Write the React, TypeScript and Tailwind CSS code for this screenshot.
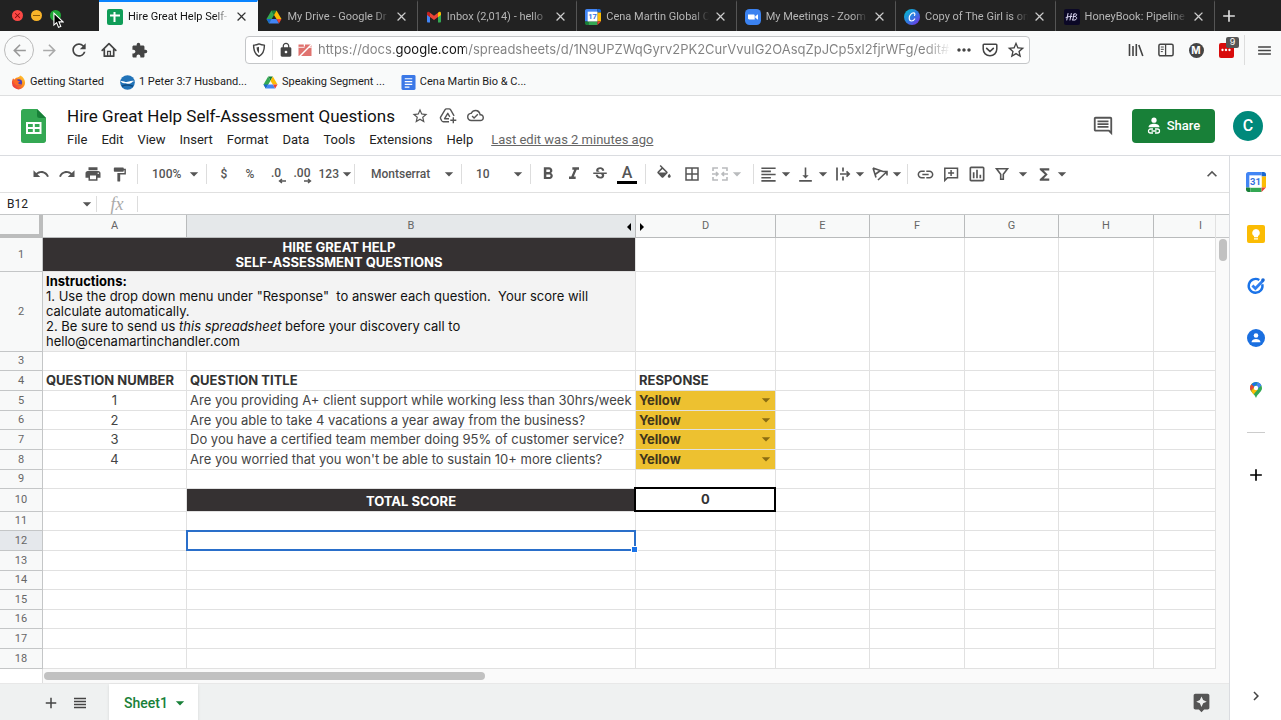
import clsx from "clsx";
import { type ReactNode } from "react";
import {
  MdAdd,
  MdArrowBack,
  MdArrowDropDown,
  MdArrowForward,
  MdAssistant,
  MdBorderAll,
  MdChevronRight,
  MdClose,
  MdExtension,
  MdFormatAlignLeft,
  MdFormatBold,
  MdFormatItalic,
  MdFormatPaint,
  MdFunctions,
  MdInsertLink,
  MdKeyboardArrowUp,
  MdLock,
  MdMenu,
  MdMoreHoriz,
  MdOutlineCloudDone,
  MdOutlineComment,
  MdOutlineInsertChart,
  MdPrint,
  MdRedo,
  MdRefresh,
  MdStarBorder,
  MdStrikethroughS,
  MdUndo,
  MdVerticalAlignBottom,
} from "react-icons/md";

type IconProps = { className?: string };

const SheetsFavicon = () => (
  <svg viewBox="0 0 16 16" className="size-4">
    <rect width="16" height="16" rx="2" fill="#109d58" />
    <path d="M6.500 3h2v10h-2zM3 5.500h10v2H3z" fill="#fff" />
  </svg>
);

const DriveIcon = ({ className = "size-4" }: IconProps) => (
  <svg viewBox="0 0 16 16" className={className}>
    <path d="M5.500 1.500h5L8 6z" fill="#188038" />
    <path d="M5.500 1.500 8 6l-5 8.500L.5 10z" fill="#34a853" />
    <path d="m10.500 1.500 5 8.500h-5L8 6z" fill="#fbbc04" />
    <path d="M.5 10h5L3 14.500z" fill="#1967d2" />
    <path d="M5.500 10h5l2.500 4.500H3z" fill="#4285f4" />
    <path d="M10.500 10h5L13 14.500z" fill="#ea4335" />
  </svg>
);

const GmailIcon = () => (
  <svg viewBox="0 0 16 16" className="size-4">
    <path d="M1 4.500v8c0 .5.400 1 1 1h2V6.500z" fill="#4285f4" />
    <path d="M15 4.500v8c0 .5-.4 1-1 1h-2V6.500z" fill="#34a853" />
    <path d="M4 3.800V8l4 3 4-3V3.800L8 6.800z" fill="#ea4335" />
    <path d="M1 4.300V6l3 2.200V3.700C2.700 2.300 1 2.800 1 4.300z" fill="#c5221f" />
    <path d="M15 4.300V6l-3 2.200V3.700c1.300-1.400 3-.9 3 .6z" fill="#fbbc04" />
  </svg>
);

const CalendarIcon = ({ day, className = "size-4" }: IconProps & { day: string }) => (
  <svg viewBox="0 0 18 18" className={className}>
    <path d="M2 0h12v4H4v10H0V2c0-1 1-2 2-2z" fill="#4285f4" />
    <path d="M14 0h2c1 0 2 1 2 2v2h-4z" fill="#1967d2" />
    <path d="M14 4h4v10h-4z" fill="#fbbc04" />
    <path d="M0 14h4v4H2c-1 0-2-1-2-2z" fill="#188038" />
    <path d="M4 14h10v4H4z" fill="#34a853" />
    <path d="M14 14h4l-4 4z" fill="#ea4335" />
    <path d="M3 3h11v11H3z" fill="#fff" />
    <text x="8.500" y="11.800" fontSize="8.500" fontWeight="700" textAnchor="middle" fill="#3573e0" fontFamily="Roboto, sans-serif">
      {day}
    </text>
  </svg>
);

const ZoomIcon = () => (
  <svg viewBox="0 0 16 16" className="size-4">
    <rect width="16" height="16" rx="4.500" fill="#3b82f0" />
    <path d="M3 5.500h5.500c.8 0 1.200.5 1.200 1.200v3.800H4.200c-.8 0-1.200-.5-1.200-1.200zM10.300 7.200 13 5.300v5.400l-2.700-1.900z" fill="#fff" />
  </svg>
);

const CanvaIcon = () => (
  <svg viewBox="0 0 16 16" className="size-4">
    <defs>
      <linearGradient id="canva" x1="0" y1="0" x2="1" y2="1">
        <stop offset="0" stopColor="#00c4cc" />
        <stop offset=".5" stopColor="#2f7be0" />
        <stop offset="1" stopColor="#7d2ae8" />
      </linearGradient>
    </defs>
    <circle cx="8" cy="8" r="8" fill="url(#canva)" />
    <path d="M10.500 6.300c.7-.8.500-2.400-.9-2.400C7.300 3.900 5.200 6.500 5.200 9c0 1.900 1 3 2.400 3 1.300 0 2.400-.9 3.100-2" fill="none" stroke="#fff" strokeWidth="1.200" strokeLinecap="round" />
  </svg>
);

const HoneyBookIcon = () => (
  <svg viewBox="0 0 16 16" className="size-4">
    <rect width="16" height="16" rx="2" fill="#0b0826" />
    <path d="M4 4.500 2.800 11M7.300 4.500 6 11M2 8.500c2-1 4-1 6-1M10 5 8.800 11M9.600 5.500c1-1.200 3.400-1 3 .6-.3 1-1.300 1.300-2.300 1.400 1.500 0 2.700.6 2.300 2-.4 1.600-2.700 2-4 1.400" fill="none" stroke="#dcd8f5" strokeWidth="1" strokeLinecap="round" />
  </svg>
);

const FirefoxIcon = () => (
  <svg viewBox="0 0 16 16" className="size-[15px]">
    <defs>
      <linearGradient id="firefox" x1="1" y1="0" x2="0" y2="1">
        <stop offset="0" stopColor="#ffd83a" />
        <stop offset=".45" stopColor="#ff8a1c" />
        <stop offset="1" stopColor="#e5194f" />
      </linearGradient>
    </defs>
    <path d="M2.300 3.500 3.600 5C4.800 3 6 2.600 7 2.600 8.500 2.400 9.300 1.500 9.800.6c2.700 1.200 5.200 4 5.200 7.600A7 7 0 0 1 1 8.500c0-2 .4-3.600 1.300-5z" fill="url(#firefox)" />
    <circle cx="8.300" cy="8" r="3.500" fill="#4e3fb5" />
    <path d="M3.600 5c1.500-.4 3 .2 3.900 1.300l2 .4c-.3 1-1.500 1.200-2 1.900.8 1.600 2.600 1.400 3.800.6-.8 2-2.800 2.700-4.500 2.200C4 10.500 3 8 3.600 5z" fill="#ff6a26" />
  </svg>
);

const EagleIcon = () => (
  <svg viewBox="0 0 16 16" className="size-[15px]">
    <circle cx="8" cy="8" r="7.800" fill="#2173b8" />
    <path d="M.5 6.500c2.500-.8 4.500 1 6.500 1s4-2 8.300-1.200c-2.300.5-3 2.700-5.300 3-2.500.4-3.600-.8-5.500-.5-1.500.1-2.500-.6-4-2.300z" fill="#fff" />
    <path d="M2 12c3-1.500 8-1.500 12 0" fill="none" stroke="#0e4a80" strokeWidth="1.500" />
  </svg>
);

const DocsIcon = () => (
  <svg viewBox="0 0 16 16" className="size-[15px]">
    <rect x=".5" width="15" height="16" rx="1.500" fill="#3b78e7" />
    <path d="M4 4h8M4 7h8M4 10h8M4 13h5" stroke="#fff" strokeWidth="1.300" />
  </svg>
);

const HomeIcon = () => (
  <svg viewBox="0 0 16 16" className="size-4">
    <path d="M1.200 8.300 8 1.700l6.800 6.600M3.300 7.500v6.700h9.400V7.500" fill="none" stroke="#444" strokeWidth="1.700" strokeLinejoin="round" strokeLinecap="round" />
    <path d="M6.600 14V9.300h2.800V14" fill="none" stroke="#444" strokeWidth="1.300" />
  </svg>
);

const ShieldIcon = () => (
  <svg viewBox="0 0 16 16" className="size-4 shrink-0">
    <path d="M8 1.900c1.800.9 3.600 1.200 5.400 1.200.1 5-1.100 9-5.400 11.300C3.700 12.100 2.500 8.100 2.600 3.100 4.400 3.100 6.200 2.800 8 1.900z" fill="none" stroke="#444" strokeWidth="1.400" strokeLinejoin="round" />
    <path d="M8 4.700v6.500C6.300 9.900 5.700 8 5.600 5.300 6.500 5.200 7.300 5 8 4.700z" fill="#444" />
  </svg>
);

const BlockedIcon = () => (
  <svg viewBox="0 0 16 16" className="size-4 shrink-0">
    <path d="M1.500 2.500h5.300v2h1.200v-2h6.500V14h-13z" fill="#e0736f" />
    <path d="M1.500 15.500 15.500 1.500" stroke="#fff" strokeWidth="1.500" />
    <path d="M1.300 5.300h6.200M11.500 5.300h3.200" stroke="#fff" strokeWidth=".9" />
  </svg>
);

const PocketIcon = () => (
  <svg viewBox="0 0 16 16" className="size-4">
    <path d="M2 2.200h12c.5 0 .8.300.8.800v4c0 4-3 6.800-6.800 6.800S1.200 11 1.200 7V3c0-.5.300-.8.800-.8z" fill="none" stroke="#444" strokeWidth="1.500" />
    <path d="m4.700 6.300 3.300 3.200 3.300-3.200" fill="none" stroke="#444" strokeWidth="1.700" strokeLinecap="round" strokeLinejoin="round" />
  </svg>
);

const LibraryIcon = () => (
  <svg viewBox="0 0 16 16" className="size-4">
    <path d="M1.500 2v12M5 4v10M8.300 2v12M10.800 3l4 11" stroke="#444" strokeWidth="1.600" fill="none" />
  </svg>
);

const SidebarIcon = () => (
  <svg viewBox="0 0 16 16" className="size-4">
    <rect x=".9" y="2.200" width="14.200" height="11.600" rx="1.500" fill="none" stroke="#444" strokeWidth="1.500" />
    <path d="M7.600 2v12" stroke="#444" strokeWidth="1.300" />
    <path d="M2.800 5h3M2.800 7.300h3M2.800 9.600h2" stroke="#444" strokeWidth="1" />
  </svg>
);

const SheetsLogo = () => (
  <svg viewBox="0 0 25 34" className="h-[34px] w-[25px] shrink-0">
    <path d="M2.500 0H16l9 9v22.500c0 1.400-1.100 2.500-2.500 2.500h-20A2.500 2.500 0 0 1 0 31.500v-29C0 1.100 1.100 0 2.500 0z" fill="#34a853" />
    <path d="m16 0 9 9h-6.500A2.500 2.500 0 0 1 16 6.500z" fill="#188038" />
    <path d="M5 13h15.500v12H5zm2 2v3h4.800v-3zm6.800 0v3h4.700v-3zM7 20v3h4.800v-3zm6.800 0v3h4.700v-3z" fill="#fff" fillRule="evenodd" />
  </svg>
);

const AddToDriveIcon = () => (
  <svg viewBox="0 0 18 18" className="size-[18px]">
    <path d="M10 14.800H4.200c-.6 0-1-.3-1.300-.8l-1.300-2.300c-.3-.5-.3-1 0-1.500l4.500-7.500c.3-.5.700-.8 1.300-.8h2.800c.6 0 1 .3 1.300.8l3.600 6.200M10 11.700H5.600l3.200-5.400 2 3.500" fill="none" stroke="#555" strokeWidth="1.400" strokeLinejoin="round" />
    <path d="M14.300 10.300v6M11.300 13.300h6" stroke="#555" strokeWidth="1.400" />
  </svg>
);

const FillIcon = () => (
  <svg viewBox="0 0 24 24" className="size-[18px]" fill="currentColor">
    <path d="M16.560 8.940 7.620 0 6.210 1.410l2.380 2.380-5.150 5.150c-.59.59-.59 1.540 0 2.120l5.500 5.500c.29.290.680.440 1.060.440s.770-.150 1.060-.440l5.500-5.500c.590-.580.590-1.530 0-2.120zM5.210 10 10 5.210 14.790 10zM19 11.500s-2 2.170-2 3.500c0 1.100.900 2 2 2s2-.900 2-2c0-1.330-2-3.500-2-3.500z" />
  </svg>
);

const FilterIcon = () => (
  <svg viewBox="0 0 18 18" className="size-[18px]">
    <path d="M3.500 3.800h11l-4.200 5.500v5H7.700v-5z" fill="none" stroke="#555" strokeWidth="1.600" />
  </svg>
);

const MergeIcon = () => (
  <svg viewBox="0 0 18 18" className="size-[18px]">
    <path d="M7 3H2v3M2 12v3h5M11 3h5v3M16 12v3h-5M1 9h6M11 9h6M5 7l2 2-2 2M13 7l-2 2 2 2" fill="none" stroke="#b9bbbd" strokeWidth="1.600" />
  </svg>
);

const WrapIcon = () => (
  <svg viewBox="0 0 18 18" className="size-[18px]">
    <path d="M3 2.500v13M9 2.500v4M9 11.500v4M6 9h9M12.500 6.300 15.200 9l-2.700 2.700" fill="none" stroke="#555" strokeWidth="1.700" />
  </svg>
);

const RotateIcon = () => (
  <svg viewBox="0 0 18 18" className="size-[18px]">
    <path d="m2 3 10 3.500M2 3l3 9.500M9.500 5.500 4 9.500M7 15l8.500-8M12 6.500h4v4" fill="none" stroke="#555" strokeWidth="1.600" />
  </svg>
);

const AddCommentIcon = () => (
  <svg viewBox="0 0 18 18" className="size-[18px]">
    <path d="M2.800 15.500V3.300h12.700v9.400H5.500zM9.100 5v6M6.100 8h6" fill="none" stroke="#555" strokeWidth="1.500" />
  </svg>
);

const DecimalArrow = ({ d }: { d: string }) => (
  <svg viewBox="0 0 8 6" className="absolute right-[3px] bottom-0 h-[6px] w-2">
    <path d={d} fill="none" stroke="#555" strokeWidth="1.400" />
  </svg>
);

const KeepIcon = () => (
  <svg viewBox="0 0 20 20" className="size-5">
    <rect x="1" y="1" width="18" height="18" rx="2" fill="#fbbc04" />
    <path d="M10 5a3.800 3.800 0 0 1 2 7v1.300H8V12a3.800 3.800 0 0 1 2-7zM8 14.200h4v1.300H8z" fill="#fff" />
  </svg>
);

const TasksIcon = () => (
  <svg viewBox="0 0 20 20" className="size-5">
    <path d="M16.300 8.200a6.900 6.900 0 1 1-3-4.200" fill="none" stroke="#1a73e8" strokeWidth="2.400" />
    <path d="m6.400 9.500 3 3 7.800-8" fill="none" stroke="#2f7ff0" strokeWidth="2.800" />
    <circle cx="17" cy="4" r="1.800" fill="#1967d2" />
  </svg>
);

const ContactsIcon = () => (
  <svg viewBox="0 0 20 20" className="size-5">
    <circle cx="10" cy="10" r="9" fill="#1a6fe0" />
    <circle cx="10" cy="7.500" r="2.300" fill="#fff" />
    <path d="M5.500 14.200c0-2.200 2.500-3.200 4.500-3.200s4.500 1 4.500 3.200z" fill="#fff" />
  </svg>
);

const MapsIcon = () => (
  <svg viewBox="0 0 20 20" className="size-5">
    <path d="M10 2a6 6 0 0 1 6 6c0 4-4.500 5.500-6 10-1.500-4.500-6-6-6-10a6 6 0 0 1 6-6z" fill="#34a853" />
    <path d="M5.500 4.300A6 6 0 0 1 10 2l1.700.3L8 7z" fill="#1a73e8" />
    <path d="M11.700 2.300c1.800.5 3 1.700 3.700 3.100L12 8.500l-2-2z" fill="#4285f4" />
    <path d="M5.500 4.300 8.300 7 5.100 11C3.500 8.800 3.700 6.300 5.500 4.300z" fill="#ea4335" />
    <path d="m5.100 11 3-3.500 3.400 2.300-4 4.700C6.600 13.100 5.700 12 5.100 11z" fill="#fbbc04" />
    <circle cx="10" cy="8" r="2.200" fill="#fff" />
  </svg>
);

const ShareIcon = () => (
  <svg viewBox="0 0 14 18" className="h-[18px] w-[14px]">
    <circle cx="7" cy="3.200" r="2.600" fill="#fff" />
    <path d="M1.500 10.300c0-2.700 3-3.600 5.500-3.600s5.500.9 5.500 3.600z" fill="#fff" />
    <path d="M6 12H3.500a2 2 0 0 0 0 4H6M8 12h2.500a2 2 0 0 1 0 4H8M4.500 14h5" fill="none" stroke="#fff" strokeWidth="1.300" />
  </svg>
);

const browserTabs = [
  { title: "Hire Great Help Self-", icon: <SheetsFavicon />, active: true },
  { title: "My Drive - Google Dr", icon: <DriveIcon /> },
  { title: "Inbox (2,014) - hello", icon: <GmailIcon /> },
  { title: "Cena Martin Global C", icon: <CalendarIcon day="17" /> },
  { title: "My Meetings - Zoom", icon: <ZoomIcon /> },
  { title: "Copy of The Girl is on", icon: <CanvaIcon /> },
  { title: "HoneyBook: Pipeline", icon: <HoneyBookIcon /> },
];

const TabStrip = () => (
  <div className="flex h-[31px] bg-[#222]">
    <div className="relative flex w-[99px] items-center gap-2 pl-3">
      <button aria-label="Close window" className="flex size-[11px] items-center justify-center rounded-full bg-[#fb4845] text-[#7a0909]">
        <MdClose size={9} />
      </button>
      <button aria-label="Minimize window" className="flex size-[11px] items-center justify-center rounded-full bg-[#f9b429]">
        <span className="h-px w-[7px] bg-[#8a5a07]" />
      </button>
      <button aria-label="Zoom window" className="size-[11px] rounded-full bg-[#1fa636]" />
      <svg viewBox="0 0 12 18" className="absolute top-3 left-[53px] h-[17px] w-[11px]">
        <path d="M1 1v13l3-2.700L6 16.500l2.500-1-2-5H11z" fill="#000" stroke="#fff" strokeWidth="1.200" />
      </svg>
    </div>
    {browserTabs.map(({ title, icon, active }) => (
      <div
        key={title}
        className={clsx(
          "flex min-w-0 flex-1 items-center gap-1 border-t-2 border-r pr-2 pl-2",
          active ? "border-[#f9fafa] border-t-[#0a84ff] bg-[#f9fafa] text-[#111]" : "border-t-[#222] border-r-[#555] text-[#b5b5b5]",
        )}
      >
        <span className="shrink-0">{icon}</span>
        <span className="min-w-0 flex-1 pl-px text-[11px] leading-4 whitespace-nowrap [mask-image:linear-gradient(to_right,#000_85%,transparent)]">
          {title}
        </span>
        <button aria-label={`Close ${title}`} className={clsx("shrink-0", active ? "text-[#333]" : "text-[#ccc]")}>
          <MdClose size={15} />
        </button>
      </div>
    ))}
    <div className="flex w-[66px] items-center pl-1">
      <button aria-label="New tab" className="text-[#ddd]">
        <MdAdd size={20} />
      </button>
    </div>
  </div>
);

const AddressRow = () => (
  <div className="flex h-[38px] items-center font-['Inter',sans-serif] text-[#444]">
    <div className="flex w-[245px] items-center pl-1">
      <button aria-label="Back" className="flex size-[30px] items-center justify-center rounded-full border border-[#bbb] text-[#999]">
        <MdArrowBack size={19} />
      </button>
      <button aria-label="Forward" className="flex w-[30px] justify-center text-[#aaa]">
        <MdArrowForward size={19} />
      </button>
      <button aria-label="Reload" className="flex w-[30px] justify-center">
        <MdRefresh size={20} />
      </button>
      <button aria-label="Home" className="flex w-[30px] justify-center">
        <HomeIcon />
      </button>
      <button aria-label="Add-ons" className="flex w-[30px] justify-center">
        <MdExtension size={17} />
      </button>
    </div>
    <div className="flex h-7 min-w-0 flex-1 items-center rounded border border-[#c4c6c8] bg-white pl-[5px]">
      <ShieldIcon />
      <span className="mx-[5px] h-5 w-px bg-[#ddd]" />
      <MdLock size={16} className="shrink-0" />
      <span className="w-[3px]" />
      <BlockedIcon />
      <input
        aria-label="Address"
        readOnly
        value="https://docs.google.com/spreadsheets/d/1N9UPZWqGyrv2PK2CurVvuIG2OAsqZpJCp5xl2fjrWFg/edit#gid"
        className="ml-[5px] min-w-0 flex-1 bg-[linear-gradient(to_right,#808080_76px,#111_76px,#111_147px,#808080_147px,#808080_96%,transparent)] bg-clip-text text-[13px] text-transparent outline-none"
      />
      <button aria-label="Page actions" className="flex w-[26px] justify-center">
        <MdMoreHoriz size={20} />
      </button>
      <button aria-label="Save to Pocket" className="flex w-[26px] justify-center">
        <PocketIcon />
      </button>
      <button aria-label="Bookmark this page" className="flex w-[26px] justify-center">
        <MdStarBorder size={20} />
      </button>
    </div>
    <div className="flex w-[251px] items-center justify-end pr-[2px]">
      <button aria-label="Library" className="flex w-[30px] justify-center">
        <LibraryIcon />
      </button>
      <button aria-label="Sidebars" className="flex w-[30px] justify-center">
        <SidebarIcon />
      </button>
      <button aria-label="Account" className="flex w-[30px] justify-center">
        <span className="flex size-[15px] items-center justify-center rounded-full bg-[#444] text-[10px] font-bold text-white">M</span>
      </button>
      <button aria-label="Password manager" className="relative flex w-[30px] justify-center">
        <span className="flex size-[15px] items-center justify-center rounded-[2px] bg-[#d80b0b] text-white">
          <MdMoreHoriz size={14} />
        </span>
        <span className="absolute -top-[6px] left-[15px] flex h-[11px] w-[13px] items-center justify-center rounded-[2px] bg-[#555] text-[9px] text-white">9</span>
      </button>
      <span className="ml-[3px] h-[30px] w-px bg-[#ddd]" />
      <button aria-label="Open menu" className="ml-1 flex w-[30px] justify-center">
        <MdMenu size={17} />
      </button>
    </div>
  </div>
);

const bookmarks = [
  { title: "Getting Started", icon: <FirefoxIcon /> },
  { title: "1 Peter 3:7 Husband...", icon: <EagleIcon /> },
  { title: "Speaking Segment ...", icon: <DriveIcon className="size-[15px]" /> },
  { title: "Cena Martin Bio & C...", icon: <DocsIcon /> },
];

const BookmarksBar = () => (
  <nav className="flex h-[27px] items-center gap-4 border-b border-[#dedfe0] pl-[11px]">
    {bookmarks.map(({ title, icon }) => (
      <a key={title} href="#" className="flex items-center gap-1 text-[11px] leading-4 whitespace-nowrap text-[#1b1b1b]">
        {icon}
        {title}
      </a>
    ))}
  </nav>
);

const menus = ["File", "Edit", "View", "Insert", "Format", "Data", "Tools", "Extensions", "Help"];

const DocumentHeader = () => (
  <header className="flex h-[60px] items-center border-b border-[#dadce0] bg-white pr-[18px] pl-[21px]">
    <SheetsLogo />
    <div className="ml-[21px] flex min-w-0 flex-1 flex-col pt-1">
      <div className="flex items-center text-[#555]">
        <h1 className="mr-4 text-[17px] leading-6 whitespace-nowrap text-[#111]">Hire Great Help Self-Assessment Questions</h1>
        <button aria-label="Star" className="mr-[10px]">
          <MdStarBorder size={18} />
        </button>
        <button aria-label="Move" className="mr-[10px]">
          <AddToDriveIcon />
        </button>
        <button aria-label="Document status">
          <MdOutlineCloudDone size={17} />
        </button>
      </div>
      <div className="flex items-center gap-[14px] text-[13px] leading-6 whitespace-nowrap text-[#222]">
        {menus.map((menu) => (
          <button key={menu}>{menu}</button>
        ))}
        <a href="#" className="ml-1 text-[#666] underline">
          Last edit was 2 minutes ago
        </a>
      </div>
    </div>
    <button aria-label="Open comment history" className="mr-[18px] text-[#555]">
      <MdOutlineComment size={22} />
    </button>
    <button className="mr-[18px] flex h-[34px] w-[83px] items-center justify-center gap-[6px] rounded bg-[#188038] text-[13px] font-medium text-white">
      <ShareIcon />
      Share
    </button>
    <button aria-label="Google account" className="flex size-[30px] items-center justify-center rounded-full bg-[#00897b] text-base font-medium text-white">
      C
    </button>
  </header>
);

const Caret = () => <MdArrowDropDown size={20} className="-mx-[2px] shrink-0" />;

type ToolProps = { label: string; children: ReactNode; className?: string };

const Tool = ({ label, children, className = "w-[26px] justify-center" }: ToolProps) => (
  <button aria-label={label} className={clsx("flex shrink-0 items-center", className)}>
    {children}
  </button>
);

const ToolGroup = ({ className, children }: { className: string; children: ReactNode }) => (
  <div className={clsx("flex h-5 shrink-0 items-center", className)}>{children}</div>
);

const Toolbar = () => (
  <div className="flex h-[37px] items-center border-b border-[#e0e0e0] pl-7 text-xs font-medium text-[#555]">
    <ToolGroup className="w-[109px]">
      <Tool label="Undo">
        <MdUndo size={18} />
      </Tool>
      <Tool label="Redo">
        <MdRedo size={18} />
      </Tool>
      <Tool label="Print">
        <MdPrint size={18} />
      </Tool>
      <Tool label="Paint format">
        <MdFormatPaint size={17} />
      </Tool>
    </ToolGroup>
    <ToolGroup className="w-[69px] border-l border-[#ddd]">
      <Tool label="Zoom" className="w-full justify-between pr-1 pl-[14px]">
        100%
        <Caret />
      </Tool>
    </ToolGroup>
    <ToolGroup className="w-[148px] border-l border-[#ddd] pl-1">
      <Tool label="Format as currency">$</Tool>
      <Tool label="Format as percent">%</Tool>
      <Tool label="Decrease decimal places" className="relative h-5 w-[26px] justify-center pb-[2px]">
        .0
        <DecimalArrow d="M8 3H2M4 1 1.500 3 4 5" />
      </Tool>
      <Tool label="Increase decimal places" className="relative h-5 w-[26px] justify-center pb-[2px]">
        .00
        <DecimalArrow d="M0 3h6M4 1l2.500 2L4 5" />
      </Tool>
      <Tool label="More formats" className="w-10 justify-end">
        123
        <Caret />
      </Tool>
    </ToolGroup>
    <ToolGroup className="w-[107px] border-l border-[#ddd]">
      <Tool label="Font" className="w-full justify-between pr-1 pl-4">
        Montserrat
        <Caret />
      </Tool>
    </ToolGroup>
    <ToolGroup className="w-[69px] border-l border-[#ddd]">
      <Tool label="Font size" className="w-full justify-between pr-1 pl-[14px]">
        10
        <Caret />
      </Tool>
    </ToolGroup>
    <ToolGroup className="w-[115px] border-l border-[#ddd] pl-1">
      <Tool label="Bold">
        <MdFormatBold size={20} />
      </Tool>
      <Tool label="Italic">
        <MdFormatItalic size={20} />
      </Tool>
      <Tool label="Strikethrough">
        <MdStrikethroughS size={18} />
      </Tool>
      <Tool label="Text color" className="w-7 flex-col justify-center">
        <span className="text-base leading-4">A</span>
        <span className="h-[3px] w-5 bg-black" />
      </Tool>
    </ToolGroup>
    <ToolGroup className="w-[108px] border-l border-[#ddd] pl-1">
      <Tool label="Fill color" className="w-7 justify-center">
        <FillIcon />
      </Tool>
      <Tool label="Borders" className="w-7 justify-center">
        <MdBorderAll size={18} />
      </Tool>
      <Tool label="Merge cells" className="w-11 justify-center text-[#b9bbbd]">
        <MergeIcon />
        <Caret />
      </Tool>
    </ToolGroup>
    <ToolGroup className="w-[154px] border-l border-[#ddd] pl-1">
      <Tool label="Horizontal align" className="w-[37px] justify-center">
        <MdFormatAlignLeft size={19} />
        <Caret />
      </Tool>
      <Tool label="Vertical align" className="w-[37px] justify-center">
        <MdVerticalAlignBottom size={19} />
        <Caret />
      </Tool>
      <Tool label="Text wrapping" className="w-[37px] justify-center">
        <WrapIcon />
        <Caret />
      </Tool>
      <Tool label="Text rotation" className="w-[37px] justify-center">
        <RotateIcon />
        <Caret />
      </Tool>
    </ToolGroup>
    <ToolGroup className="border-l border-[#ddd] pl-1">
      <Tool label="Insert link">
        <MdInsertLink size={19} />
      </Tool>
      <Tool label="Insert comment">
        <AddCommentIcon />
      </Tool>
      <Tool label="Insert chart">
        <MdOutlineInsertChart size={20} />
      </Tool>
      <Tool label="Create a filter" className="w-11 justify-center gap-1">
        <FilterIcon />
        <Caret />
      </Tool>
      <Tool label="Functions" className="w-[37px] justify-center">
        <MdFunctions size={19} />
        <Caret />
      </Tool>
    </ToolGroup>
    <button aria-label="Hide the menus" className="mr-[7px] ml-auto">
      <MdKeyboardArrowUp size={20} />
    </button>
  </div>
);

const FormulaBar = () => (
  <div className="flex h-[21px] items-center text-xs text-[#222]">
    <input aria-label="Name box" defaultValue="B12" className="w-[78px] bg-transparent pl-[7px] outline-none" />
    <button aria-label="Named ranges" className="flex w-[18px] justify-center text-[#555]">
      <Caret />
    </button>
    <span className="h-4 w-px bg-[#ddd]" />
    <label htmlFor="formula" className="w-10 text-center font-['Liberation_Serif',serif] text-lg leading-5 text-[#aaa] italic">
      fx
    </label>
    <span className="h-4 w-px bg-[#ddd]" />
    <input id="formula" className="min-w-0 flex-1 bg-transparent px-2 outline-none" />
  </div>
);

const columns = [
  { name: "A", width: "w-[144px]" },
  { name: "B", width: "w-[449px]" },
  { name: "D", width: "w-[140px]" },
  { name: "E", width: "w-[94px]" },
  { name: "F", width: "w-[95px]" },
  { name: "G", width: "w-[94px]" },
  { name: "H", width: "w-[95px]" },
  { name: "I", width: "w-[94px]" },
];

const questions = [
  { row: 5, height: "h-5", title: "Are you providing A+ client support while working less than 30hrs/week" },
  { row: 6, height: "h-[19px]", title: "Are you able to take 4 vacations a year away from the business?" },
  { row: 7, height: "h-5", title: "Do you have a certified team member doing 95% of customer service?" },
  { row: 8, height: "h-5", title: "Are you worried that you won't be able to sustain 10+ more clients?" },
];

const emptyRows = [
  { row: 13, height: "h-5" },
  { row: 14, height: "h-[19px]" },
  { row: 15, height: "h-5" },
  { row: 16, height: "h-[19px]" },
  { row: 17, height: "h-5" },
  { row: 18, height: "h-5" },
];

const Cell = ({ className, colSpan, children }: { className?: string; colSpan?: number; children?: ReactNode }) => (
  <td colSpan={colSpan} className={clsx("border-r border-b border-[#e1e1e1] p-0", className)}>
    {children}
  </td>
);

const Blank = ({ count }: { count: number }) => Array.from({ length: count }, (_, i) => <Cell key={i} />);

const Row = ({ row, height, children }: { row: number; height: string; children: ReactNode }) => (
  <tr className={height}>
    <th
      scope="row"
      className={clsx(
        "border-r border-b border-[#c4c6c7] p-0 font-['Roboto',sans-serif] text-[11px] leading-4 font-normal text-[#666]",
        row === 12 ? "bg-[#e5e8ec]" : "bg-[#f8f9f9]",
      )}
    >
      {row}
    </th>
    {children}
  </tr>
);

const Grid = () => (
  <table className="w-[1248px] table-fixed border-separate border-spacing-0 bg-white text-[13px] leading-[15px] text-[#444]">
    <colgroup>
      <col className="w-[43px]" />
      {columns.map(({ name, width }) => (
        <col key={name} className={width} />
      ))}
    </colgroup>
    <thead>
      <tr className="h-[23px]">
        <th aria-label="Select all" className="border-r-4 border-b-4 border-[#bcbdbd] bg-[#f8f9f9] p-0" />
        {columns.map(({ name }) => (
          <th
            key={name}
            scope="col"
            className={clsx(
              "relative border-r border-b border-[#b9bbbc] p-0 font-['Roboto',sans-serif] text-[11px] leading-4 font-normal text-[#666]",
              name === "B" ? "bg-[#e5e8ea]" : "bg-[#f8f9f9]",
            )}
          >
            {name}
            {name === "B" && (
              <svg viewBox="0 0 4 8" className="absolute top-2 right-1 h-2 w-1">
                <path d="M4 0v8L0 4z" />
              </svg>
            )}
            {name === "D" && (
              <svg viewBox="0 0 4 8" className="absolute top-2 left-1 h-2 w-1">
                <path d="M0 0v8l4-4z" />
              </svg>
            )}
          </th>
        ))}
      </tr>
    </thead>
    <tbody>
      <Row row={1} height="h-[34px]">
        <Cell colSpan={2} className="bg-[#353132] text-center font-bold text-white">
          HIRE GREAT HELP
          <br />
          SELF-ASSESSMENT QUESTIONS
        </Cell>
        <Blank count={6} />
      </Row>
      <Row row={2} height="h-20">
        <Cell colSpan={2} className="bg-[#f3f3f3] pr-5 pl-[3px] text-[#111]">
          <b className="text-black">Instructions:</b>
          <br />
          1. Use the drop down menu under "Response"&nbsp; to answer each question.&nbsp; Your score will
          <br />
          calculate automatically.
          <br />
          2. Be sure to send us <i>this spreadsheet</i> before your discovery call to
          <br />
          hello@cenamartinchandler.com
        </Cell>
        <Blank count={6} />
      </Row>
      <Row row={3} height="h-[19px]">
        <Blank count={8} />
      </Row>
      <Row row={4} height="h-5">
        <Cell className="pl-[3px] font-bold whitespace-nowrap text-[#333]">QUESTION NUMBER</Cell>
        <Cell className="pl-[3px] font-bold text-[#333]">QUESTION TITLE</Cell>
        <Cell className="pl-[3px] font-bold text-[#333]">RESPONSE</Cell>
        <Blank count={5} />
      </Row>
      {questions.map(({ row, height, title }, i) => (
        <Row key={row} row={row} height={height}>
          <Cell className="text-center">{i + 1}</Cell>
          <Cell className="overflow-hidden pl-[3px] whitespace-nowrap">{title}</Cell>
          <Cell className="relative border-[#d6af2f] bg-[#edc130]">
            <select aria-label={`Response ${i + 1}`} className="block w-full appearance-none pl-[3px] font-bold text-[#40351c] outline-none">
              <option>Yellow</option>
            </select>
            <MdArrowDropDown size={20} className="pointer-events-none absolute -top-px -right-px text-[#8a6d12]" />
          </Cell>
          <Blank count={5} />
        </Row>
      ))}
      <Row row={9} height="h-[19px]">
        <Blank count={8} />
      </Row>
      <Row row={10} height="h-[23px]">
        <Cell />
        <Cell className="bg-[#353132] pt-[3px] text-center font-bold text-white">TOTAL SCORE</Cell>
        <Cell className="relative pb-[2px] text-center font-bold text-[#333]">
          0
          <span className="absolute -top-[2px] -right-px -bottom-px -left-[2px] border-2 border-black" />
        </Cell>
        <Blank count={5} />
      </Row>
      <Row row={11} height="h-[19px]">
        <Blank count={8} />
      </Row>
      <Row row={12} height="h-5">
        <Cell />
        <Cell className="relative">
          <span className="absolute -top-px -right-px -bottom-px -left-px border-2 border-[#2a6fca]" />
          <span className="absolute -right-[3px] -bottom-[3px] size-[7px] border border-white bg-[#1a73e8]" />
        </Cell>
        <Blank count={6} />
      </Row>
      {emptyRows.map(({ row, height }) => (
        <Row key={row} row={row} height={height}>
          <Blank count={8} />
        </Row>
      ))}
    </tbody>
  </table>
);

const SheetTabs = () => (
  <div className="flex min-h-[37px] flex-1 items-stretch bg-[#eff1f1] text-[#444]">
    <div className="flex w-[109px] items-center gap-[14px] pl-[42px]">
      <button aria-label="Add sheet">
        <MdAdd size={18} />
      </button>
      <button aria-label="All sheets">
        <svg viewBox="0 0 12 12" className="size-3">
          <path d="M0 1.500h12M0 4.500h12M0 7.500h12M0 10.500h12" stroke="#444" strokeWidth="1.700" />
        </svg>
      </button>
    </div>
    <button className="flex items-center gap-1 bg-white pr-[10px] pl-[15px] text-sm font-medium text-[#188038] shadow-sm">
      Sheet1
      <Caret />
    </button>
    <button aria-label="Explore" className="mr-[17px] ml-auto text-[#555]">
      <MdAssistant size={21} />
    </button>
  </div>
);

const SidePanel = () => (
  <aside className="flex w-[52px] shrink-0 flex-col items-center border-l border-[#dadce0] bg-white pt-4 pb-4">
    <div className="flex flex-col gap-8">
      <button aria-label="Calendar">
        <CalendarIcon day="31" className="size-5" />
      </button>
      <button aria-label="Keep">
        <KeepIcon />
      </button>
      <button aria-label="Tasks">
        <TasksIcon />
      </button>
      <button aria-label="Contacts">
        <ContactsIcon />
      </button>
      <button aria-label="Maps">
        <MapsIcon />
      </button>
    </div>
    <hr className="mt-8 w-[18px] border-[#ccc]" />
    <button aria-label="Get add-ons" className="mt-8 text-black">
      <MdAdd size={20} />
    </button>
    <button aria-label="Hide side panel" className="mt-auto text-[#444]">
      <MdChevronRight size={18} />
    </button>
  </aside>
);

export default function App() {
  return (
    <div className="flex min-h-screen flex-col overflow-hidden bg-white font-['Roboto',sans-serif]">
      <div className="bg-[#f9fafa]">
        <TabStrip />
        <AddressRow />
        <BookmarksBar />
      </div>
      <DocumentHeader />
      <div className="flex flex-1">
        <main className="flex min-w-0 flex-1 flex-col">
          <Toolbar />
          <FormulaBar />
          <div className="flex border-t border-[#c4c6c7]">
            <div className="min-w-0 flex-1 overflow-hidden font-['Inter',sans-serif]">
              <Grid />
            </div>
            <div className="w-[14px] border-l border-[#e1e1e1] bg-[#fafafa]">
              <div className="h-[23px] border-b border-[#c4c6c7] bg-[#f8f9f9]" />
              <div className="mx-auto mt-px h-[22px] w-2 rounded-full bg-[#c1c1c1]" />
            </div>
          </div>
          <div className="flex h-[15px] items-center border-b border-[#e8e8e8] bg-[#fafafa]">
            <div className="h-full w-[43px] border-r border-[#ddd] bg-white" />
            <div className="ml-px h-2 w-[441px] rounded-full bg-[#c1c1c1]" />
          </div>
          <SheetTabs />
        </main>
        <SidePanel />
      </div>
    </div>
  );
}
